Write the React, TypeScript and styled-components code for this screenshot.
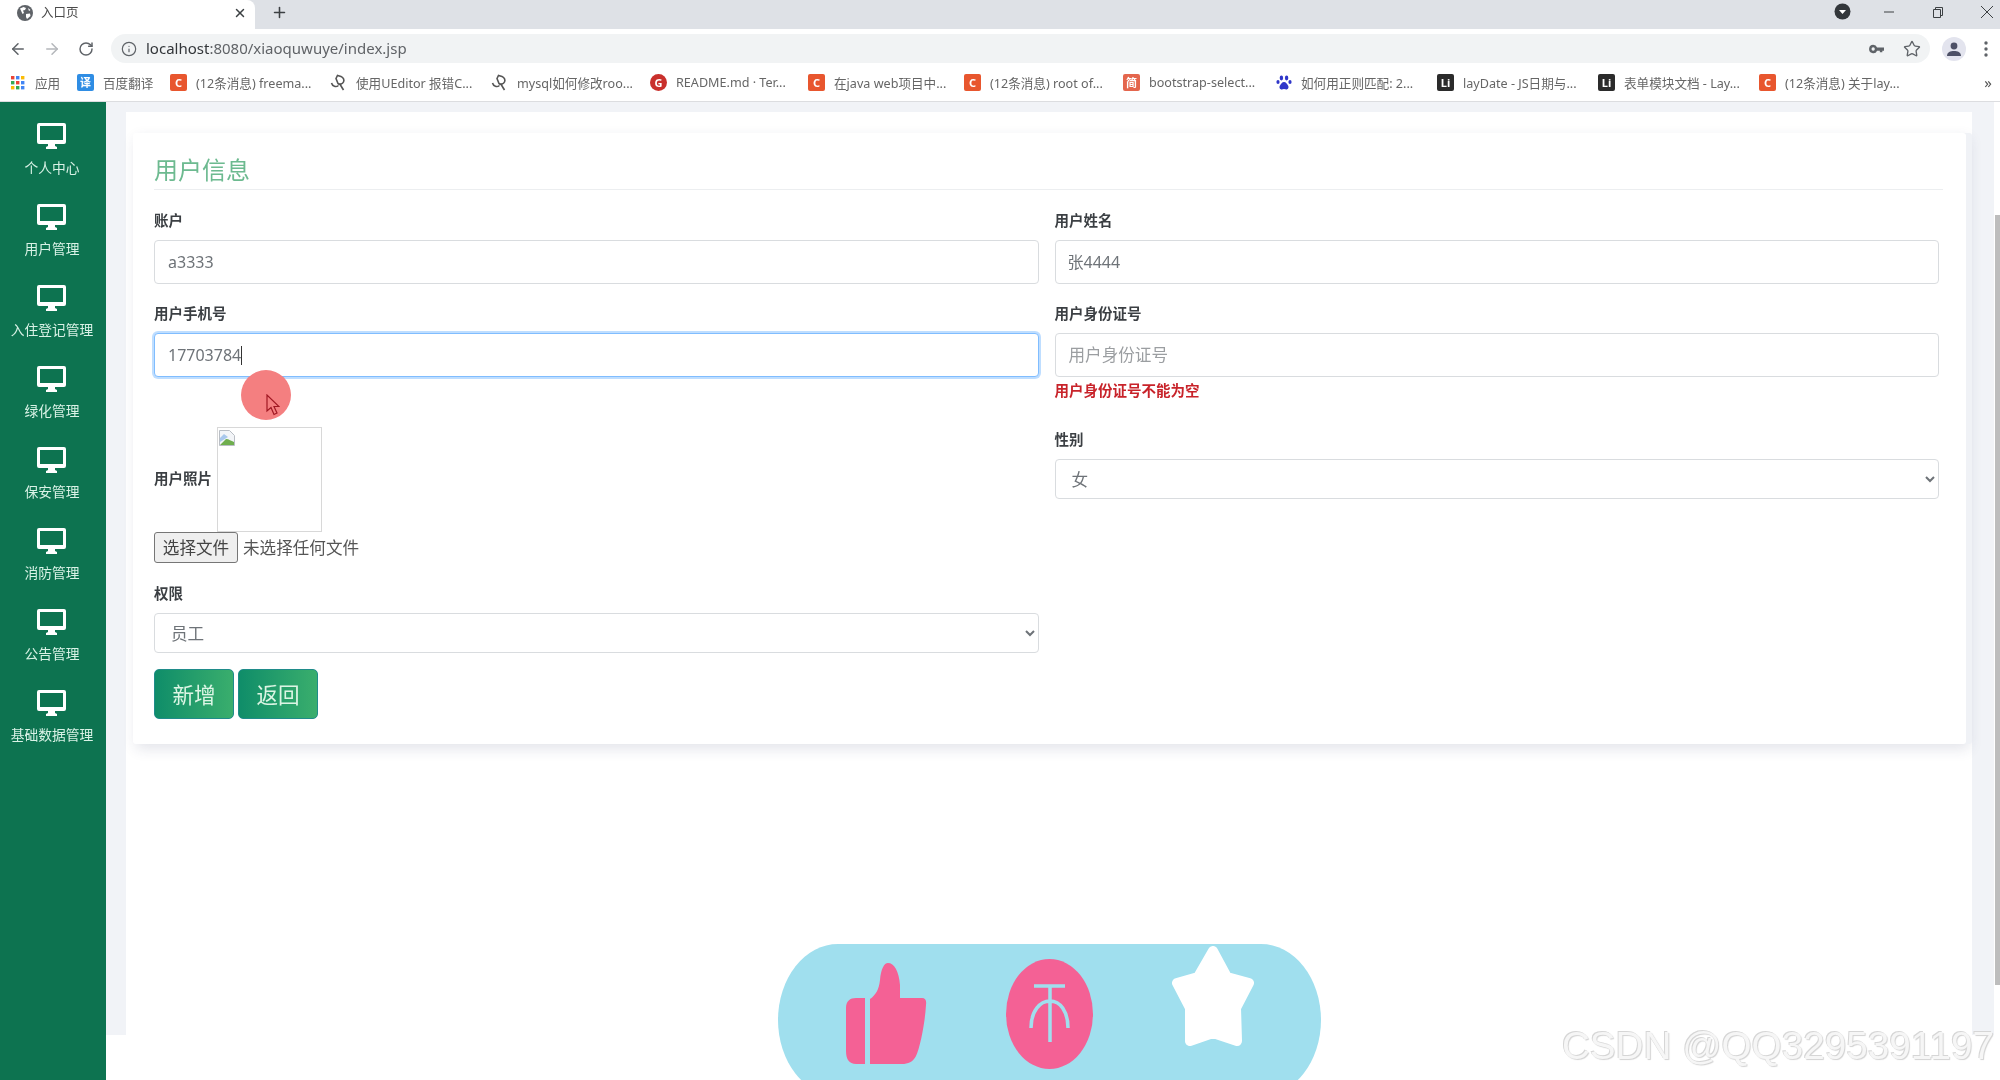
import styled, { createGlobalStyle } from "styled-components";
import { ArrowLeft, ArrowRight, Info, Plus, RotateCw, Star, X } from "lucide-react";

const GlobalStyle = createGlobalStyle`
  * {
    box-sizing: border-box;
  }
  html, body {
    margin: 0;
    padding: 0;
    background: #fff;
  }
  body {
    font-family: "Noto Sans", "Noto Sans CJK SC", sans-serif;
  }
`

const Page = styled.div`
  position: relative;
  width: 2000px;
  height: 1080px;
  overflow: hidden;
  display: flex;
  flex-direction: column;
  background: #fff;
  filter: blur(0.4px);
`

/* browser chrome */
const TabStrip = styled.div`
  height: 29px;
  display: flex;
  align-items: center;
  background: #dee1e6;
`
const Tab = styled.div`
  width: 255px;
  height: 29px;
  display: flex;
  align-items: center;
  gap: 8px;
  padding: 0 8px 4px 17px;
  background: #fff;
  border-radius: 0 8px 0 0;
  font-size: 12.5px;
  color: #4a4a4a;
`
const TabTitle = styled.span`
  flex: 1;
  margin-bottom: 3px;
`
const NewTab = styled.div`
  width: 48px;
  display: flex;
  justify-content: center;
  color: #3c4043;
  padding-bottom: 4px;
`
const WindowControls = styled.div`
  margin-left: auto;
  margin-right: -11px;
  display: flex;
  align-items: center;
  padding-bottom: 6px;
`
const WindowCell = styled.div<{ $w?: number }>`
  width: ${p => p.$w ?? 49}px;
  display: flex;
  justify-content: center;
  color: #3c4043;
`
const Toolbar = styled.div`
  height: 35px;
  display: flex;
  align-items: flex-start;
  padding: 5px 0 1px 1px;
  background: #fff;
`
const NavCell = styled.div<{ $w?: number; $dim?: boolean }>`
  width: ${p => p.$w ?? 34}px;
  height: 29px;
  display: flex;
  align-items: center;
  justify-content: center;
  color: ${p => p.$dim ? "#b4b7bb" : "#5f6368"};
`
const Omnibox = styled.div`
  flex: 1;
  height: 29px;
  margin: 0 7px 0 8px;
  display: flex;
  align-items: center;
  padding: 0 9px 0 10px;
  gap: 9px;
  background: #f1f3f4;
  border-radius: 15px;
  color: #5f6368;
`
const Url = styled.div`
  flex: 1;
  margin-bottom: 2px;
  font-size: 15px;
  color: #606367;
`
const Host = styled.span`
  color: #33363a;
`
const OmniIcons = styled.div`
  display: flex;
  align-items: center;
  gap: 19px;
`
const BookmarksBar = styled.div`
  height: 38px;
  display: flex;
  align-items: center;
  padding-left: 10px;
  background: #fff;
  border-bottom: 1px solid #dcdde0;
  position: relative;
`
const Bookmark = styled.div<{ $w: number }>`
  width: ${p => p.$w}px;
  display: flex;
  align-items: center;
  gap: 9px;
  font-size: 12.6px;
  color: #666;
  white-space: nowrap;
  overflow: hidden;
`
const Favicon = styled.span<{ $bg: string; $round?: boolean }>`
  width: 17px;
  height: 17px;
  flex: none;
  display: flex;
  align-items: center;
  justify-content: center;
  background: ${p => p.$bg};
  border-radius: ${p => p.$round ? "50%" : "2px"};
  color: #fff;
  font-size: 11px;
  font-weight: 700;
  line-height: 1;
`
const MoreBookmarks = styled.span`
  position: absolute;
  right: 8px;
  top: 8px;
  font-size: 15px;
  color: #555;
`

/* page body */
const Main = styled.div`
  flex: 1;
  display: flex;
  min-height: 0;
`
const Sidebar = styled.nav`
  width: 106px;
  flex: none;
  padding-right: 2px;
  background: #0d7350;
`
const NavItem = styled.div`
  height: 81px;
  padding-top: 21px;
  display: flex;
  flex-direction: column;
  align-items: center;
`
const NavLabel = styled.span`
  margin-top: 9px;
  font-size: 13.75px;
  line-height: 20px;
  color: #d9f2e6;
  white-space: nowrap;
`
const Content = styled.div`
  flex: 1;
  height: 933px;
  padding: 10px 22px 0 20px;
  background: #f1f3f7;
`
const Panel = styled.div`
  height: 100%;
  padding: 21px 6px 0 7px;
  background: #fff;
`
const Card = styled.section`
  height: 611px;
  padding: 20px 27px 0 21px;
  background: #fff;
  border-radius: 3px;
  box-shadow: 6px 0 0 #f0f2f6, 3px 5px 14px rgba(40, 50, 90, 0.13);
`
const Title = styled.h2`
  margin: 0 -4px 20px 0;
  height: 37px;
  font-size: 24px;
  line-height: 34px;
  font-weight: 400;
  color: #6dba90;
  border-bottom: 1px solid #eceef0;
`
const Columns = styled.div`
  display: grid;
  grid-template-columns: 1fr 1fr;
  column-gap: 16px;
`
const Column = styled.div`
  display: flex;
  flex-direction: column;
  align-items: stretch;
`
const Label = styled.label<{ $top?: number }>`
  display: block;
  margin-top: ${p => p.$top ?? 0}px;
  margin-bottom: 10px;
  font-size: 14.5px;
  line-height: 20px;
  font-weight: 700;
  color: #3b3f43;
`
const Input = styled.input<{ $focus?: boolean; $cjk?: boolean }>`
  width: 100%;
  height: 44px;
  padding: 0 13px ${p => p.$cjk ? 2 : 0}px ${p => p.$cjk ? 12 : 13}px;
  background: #fff;
  border: 1px solid ${p => p.$focus ? "#80bdff" : "#d9dcdf"};
  border-radius: 4px;
  box-shadow: ${p => p.$focus ? "0 0 0 2px rgba(0, 123, 255, 0.25)" : "none"};
  font-family: inherit;
  font-size: 16px;
  line-height: 22px;
  color: #6e7378;
  outline: none;

  &::placeholder {
    font-size: 16.6px;
    color: #9b9ea1;
  }
`
const FocusField = styled.div`
  position: relative;
`
const Caret = styled.span`
  position: absolute;
  left: 87px;
  top: 13px;
  width: 1px;
  height: 19px;
  background: #333;
`
const ErrorText = styled.div`
  margin-top: 3px;
  font-size: 14.5px;
  line-height: 20px;
  font-weight: 700;
  color: #c8232a;
`
const Select = styled.select`
  width: 100%;
  height: 40px;
  padding: 0 12px;
  background: #fff;
  border: 1px solid #d9dcdf;
  border-radius: 4px;
  font-family: inherit;
  font-size: 16.6px;
  color: #6e7378;
  outline: none;
`
const PhotoRow = styled.div`
  margin-top: 50px;
  display: flex;
  align-items: center;
  gap: 5px;
`
const PhotoLabel = styled.span`
  width: 58px;
  margin-bottom: 5px;
  font-size: 14.5px;
  font-weight: 700;
  color: #3b3f43;
  white-space: nowrap;
`
const PhotoBox = styled.div`
  width: 105px;
  height: 105px;
  padding: 1px;
  border: 1px solid #d8d8d8;
`
const FileRow = styled.div`
  display: flex;
  align-items: center;
  gap: 5px;
  margin-bottom: 20px;
`
const FileButton = styled.button`
  width: 84px;
  height: 31px;
  padding: 0 0 2px;
  background: #efefef;
  border: 1px solid #767676;
  border-radius: 3px;
  font-family: inherit;
  font-size: 16.6px;
  color: #444;
`
const FileName = styled.span`
  margin-bottom: 2px;
  font-size: 16.6px;
  color: #555;
`
const Actions = styled.div`
  display: flex;
  gap: 4px;
  margin-top: 16px;
`
const ActionButton = styled.button`
  width: 80px;
  height: 50px;
  padding: 0 0 2px;
  background: linear-gradient(90deg, #0f8d69, #3aae6d);
  border: 1px solid #1f8c8a;
  border-radius: 5px;
  font-family: inherit;
  font-size: 21.6px;
  color: #dcf5e4;
`
const ScrollTrack = styled.div`
  width: 6px;
  flex: none;
  padding: 113px 0 0 1px;
`
const ScrollThumb = styled.div`
  height: 770px;
  background: #bdbdbd;
`

/* things that lie over the page */
const CursorHalo = styled.div`
  position: absolute;
  left: 241px;
  top: 370px;
  width: 50px;
  height: 50px;
  border-radius: 50%;
  background: #f47f80;
`
const CursorArrow = styled.svg`
  position: absolute;
  left: 266px;
  top: 394px;
`
const ReactionPill = styled.div`
  position: absolute;
  left: 778px;
  top: 944px;
  width: 543px;
  height: 152px;
  background: #a0dfee;
  border-radius: 60px / 76px;
`
const Reaction = styled.svg<{ $x: number; $y: number }>`
  position: absolute;
  left: ${p => p.$x}px;
  top: ${p => p.$y}px;
`
const Watermark = styled.div`
  position: absolute;
  right: 6px;
  bottom: 12px;
  font-family: "Liberation Sans", Arial, sans-serif;
  font-size: 38.7px;
  line-height: 44px;
  color: #f6f6f6;
  text-shadow: -1px -1px 0 #d6d6d6, 1px 1px 1px #d2d2d2;
  white-space: nowrap;
`

function MonitorIcon() {
  return (
    <svg width="30" height="26" viewBox="0 0 30 26">
      <path
        fill="#fff"
        fillRule="evenodd"
        d="M2 0h25a2 2 0 0 1 2 2v17a2 2 0 0 1-2 2H18v2l2 1v2H9v-2l2-1v-2H2a2 2 0 0 1-2-2V2a2 2 0 0 1 2-2zM3 3v14h23V3z"
      />
    </svg>
  );
}

function GlobeIcon() {
  return (
    <svg width="16" height="16" viewBox="0 0 16 16">
      <circle cx="8" cy="8" r="8" fill="#5f6368" />
      <path fill="#fff" d="M3 3.5 6.5 2 9 3l-1 2-2 .5L7 8 5.5 9zM9 9l4-.5.5 2.5L10 14 9 12zM11 3l2.5 2-1.5 1z" />
    </svg>
  );
}

function AppsIcon() {
  const colors = ["#ea4335", "#4285f4", "#fbbc05", "#34a853", "#ea4335", "#4285f4", "#fbbc05", "#34a853", "#4285f4"];
  return (
    <svg width="16" height="16" viewBox="0 0 16 16" style={{ flex: "none" }}>
      {colors.map((c, i) => (
        <rect key={i} x={1 + (i % 3) * 5} y={1 + Math.floor(i / 3) * 5} width="3.4" height="3.4" fill={c} />
      ))}
    </svg>
  );
}

function SwirlIcon() {
  return (
    <svg width="17" height="17" viewBox="0 0 17 17" fill="none" stroke="#555" strokeWidth="1.6" style={{ flex: "none" }}>
      <path d="M1.500 9c1 3.500 4.500 4.500 7 2.500" />
      <path d="M6 4.500 7.500 1.500l3.500 1c2.500 1 3.500 3.500 2.500 5.500-1 2-3.500 3-5.500 1.500z" />
      <path d="M9.500 9.500 13.500 16" />
    </svg>
  );
}

function PawIcon() {
  return (
    <svg width="16" height="16" viewBox="0 0 16 16" fill="#2f36c9" style={{ flex: "none" }}>
      <ellipse cx="5.4" cy="3" rx="1.7" ry="2.4" />
      <ellipse cx="10.6" cy="3" rx="1.7" ry="2.4" />
      <ellipse cx="2" cy="7" rx="1.6" ry="2.1" />
      <ellipse cx="14" cy="7" rx="1.6" ry="2.1" />
      <path d="M8 7c2 0 3 2 4 3.500 1 1.500.5 4-2 4-1 0-1.400-.4-2-.4s-1 .4-2 .4c-2.500 0-3-2.500-2-4C5 9 6 7 8 7z" />
    </svg>
  );
}

function KeyIcon() {
  return (
    <svg width="15" height="10" viewBox="0 0 18 12" fill="#5f6368" fillRule="evenodd">
      <path d="M5 1a5 5 0 0 1 4.700 3.200H18V8h-2v2h-3V8H9.700A5 5 0 1 1 5 1zm0 3a2 2 0 1 0 0 4 2 2 0 0 0 0-4z" />
    </svg>
  );
}

function AvatarIcon() {
  return (
    <svg width="24" height="24" viewBox="0 0 24 24">
      <circle cx="12" cy="12" r="12" fill="#e3e4ee" />
      <circle cx="12" cy="9" r="3.400" fill="#4d5066" />
      <path d="M5 19c0-4 3.500-5 7-5s7 1 7 5z" fill="#4d5066" />
    </svg>
  );
}

function DotsIcon() {
  return (
    <svg width="4" height="16" viewBox="0 0 4 16" fill="#5f6368">
      <circle cx="2" cy="2" r="1.700" />
      <circle cx="2" cy="8" r="1.700" />
      <circle cx="2" cy="14" r="1.700" />
    </svg>
  );
}

function ProfileBadge() {
  return (
    <svg width="17" height="17" viewBox="0 0 17 17">
      <circle cx="8.500" cy="8.500" r="8" fill="#33373b" />
      <path d="M5 7h7l-3.500 4z" fill="#fff" />
    </svg>
  );
}

function BrokenImage() {
  return (
    <svg width="16" height="16" viewBox="0 0 16 16">
      <path d="M0.500 0.500h10l5 5v10h-15z" fill="#f3f5f8" stroke="#b9bec5" />
      <path d="M1 15 7 9c3 0 5 2 8 3v3z" fill="#6fae4e" />
      <path d="M1 8l4-4 4 3-8 5z" fill="#a9c8ec" />
    </svg>
  );
}

const navItems = ["个人中心", "用户管理", "入住登记管理", "绿化管理", "保安管理", "消防管理", "公告管理", "基础数据管理"];

const C = <Favicon $bg="#e8562e">C</Favicon>;
const Lay = <Favicon $bg="#2b2b2b">Li</Favicon>;

const bookmarks = [
  { w: 67, icon: <AppsIcon />, text: "应用" },
  { w: 93, icon: <Favicon $bg="#2f8de4">译</Favicon>, text: "百度翻译" },
  { w: 160, icon: C, text: "(12条消息) freema..." },
  { w: 161, icon: <SwirlIcon />, text: "使用UEditor 报错C..." },
  { w: 159, icon: <SwirlIcon />, text: "mysql如何修改roo..." },
  { w: 158, icon: <Favicon $bg="#c9302c" $round>G</Favicon>, text: "README.md · Ter..." },
  { w: 156, icon: C, text: "在java web项目中..." },
  { w: 159, icon: C, text: "(12条消息) root of..." },
  { w: 153, icon: <Favicon $bg="#e4664d">简</Favicon>, text: "bootstrap-select..." },
  { w: 161, icon: <PawIcon />, text: "如何用正则匹配: 2..." },
  { w: 161, icon: Lay, text: "layDate - JS日期与..." },
  { w: 161, icon: Lay, text: "表单模块文档 - Lay..." },
  { w: 161, icon: C, text: "(12条消息) 关于lay..." },
];

export default function App() {
  return (
    <Page>
      <GlobalStyle />

      <TabStrip>
        <Tab>
          <GlobeIcon />
          <TabTitle>入口页</TabTitle>
          <X size={14} strokeWidth={2.5} color="#3c4043" />
        </Tab>
        <NewTab><Plus size={17} strokeWidth={2.2} /></NewTab>
        <WindowControls>
          <WindowCell $w={43}><ProfileBadge /></WindowCell>
          <WindowCell><svg width="12" height="12" viewBox="0 0 12 12"><path d="M1 6h10" stroke="#3c4043" /></svg></WindowCell>
          <WindowCell>
            <svg width="12" height="12" viewBox="0 0 12 12" fill="none" stroke="#3c4043">
              <path d="M1.500 3.500h7v8h-7zM3.500 3.500v-2h7v8h-2" />
            </svg>
          </WindowCell>
          <WindowCell>
            <svg width="14" height="14" viewBox="0 0 14 14"><path d="M1 1l12 12M13 1 1 13" stroke="#3c4043" /></svg>
          </WindowCell>
        </WindowControls>
      </TabStrip>

      <Toolbar>
        <NavCell><ArrowLeft size={18} strokeWidth={2} /></NavCell>
        <NavCell $dim><ArrowRight size={18} strokeWidth={2} /></NavCell>
        <NavCell><RotateCw size={16} strokeWidth={2.2} /></NavCell>
        <Omnibox>
          <Info size={16} strokeWidth={1.8} />
          <Url><Host>localhost</Host>:8080/xiaoquwuye/index.jsp</Url>
          <OmniIcons>
            <KeyIcon />
            <Star size={18} strokeWidth={1.8} />
          </OmniIcons>
        </Omnibox>
        <NavCell><AvatarIcon /></NavCell>
        <NavCell $w={29}><DotsIcon /></NavCell>
      </Toolbar>

      <BookmarksBar>
        {bookmarks.map((b) => (
          <Bookmark key={b.text} $w={b.w}>
            {b.icon}
            {b.text}
          </Bookmark>
        ))}
        <MoreBookmarks>»</MoreBookmarks>
      </BookmarksBar>

      <Main>
        <Sidebar>
          {navItems.map((name) => (
            <NavItem key={name}>
              <MonitorIcon />
              <NavLabel>{name}</NavLabel>
            </NavItem>
          ))}
        </Sidebar>

        <Content>
          <Panel>
            <Card>
              <Title>用户信息</Title>
              <Columns>
                <Column>
                  <Label>账户</Label>
                  <Input readOnly defaultValue="a3333" />
                  <Label $top={19}>用户手机号</Label>
                  <FocusField>
                    <Input $focus readOnly defaultValue="17703784" />
                    <Caret />
                  </FocusField>
                  <PhotoRow>
                    <PhotoLabel>用户照片</PhotoLabel>
                    <PhotoBox><BrokenImage /></PhotoBox>
                  </PhotoRow>
                  <FileRow>
                    <FileButton>选择文件</FileButton>
                    <FileName>未选择任何文件</FileName>
                  </FileRow>
                  <Label>权限</Label>
                  <Select defaultValue="员工">
                    <option>员工</option>
                  </Select>
                  <Actions>
                    <ActionButton>新增</ActionButton>
                    <ActionButton>返回</ActionButton>
                  </Actions>
                </Column>

                <Column>
                  <Label>用户姓名</Label>
                  <Input $cjk readOnly defaultValue="张4444" />
                  <Label $top={19}>用户身份证号</Label>
                  <Input readOnly placeholder="用户身份证号" />
                  <ErrorText>用户身份证号不能为空</ErrorText>
                  <Label $top={29}>性别</Label>
                  <Select defaultValue="女">
                    <option>女</option>
                  </Select>
                </Column>
              </Columns>
            </Card>
          </Panel>
        </Content>

        <ScrollTrack><ScrollThumb /></ScrollTrack>
      </Main>

      <CursorHalo />
      <CursorArrow width="14" height="22" viewBox="0 0 14 22">
        <path d="M1 1v16l4-3.500 3 7 3-1.500-3-6.500h5z" fill="#f47f80" stroke="#a01822" strokeWidth="1.200" />
      </CursorArrow>

      <ReactionPill />
      <Reaction $x={846} $y={963} width="81" height="102" viewBox="0 0 81 102" fill="#f46195">
        <path d="M19 35V101H10C3 101 0 96 0 88V45C0 38 4 35 10 35Z" />
        <path d="M24 101V36C30 32 33 26 34 17C35 6 38 0 42 0C48 0 53 8 54 22V35H76Q81 35 80 42C79 60 74 85 70 93C67 99 62 101 56 101Z" />
      </Reaction>
      <Reaction $x={1006} $y={959} width="87" height="110" viewBox="0 0 87 110">
        <ellipse cx="43.500" cy="55" rx="43.500" ry="55" fill="#f46195" />
        <path d="M28 27H59M44 27V83M25 69C25 52 34 42 44 42C54 42 62 52 62 69" fill="none" stroke="#a0dfee" strokeWidth="3.500" />
      </Reaction>
      <Reaction $x={1172} $y={946} width="82" height="102" viewBox="0 0 82 102">
        <path
          d="M41 5 55 31 77 37 64 62 65 95 41 87 18 95 18 62 5 37 26 31Z"
          fill="#fff"
          stroke="#fff"
          strokeWidth="10"
          strokeLinejoin="round"
        />
      </Reaction>

      <Watermark>CSDN @QQ3295391197</Watermark>
    </Page>
  );
}
